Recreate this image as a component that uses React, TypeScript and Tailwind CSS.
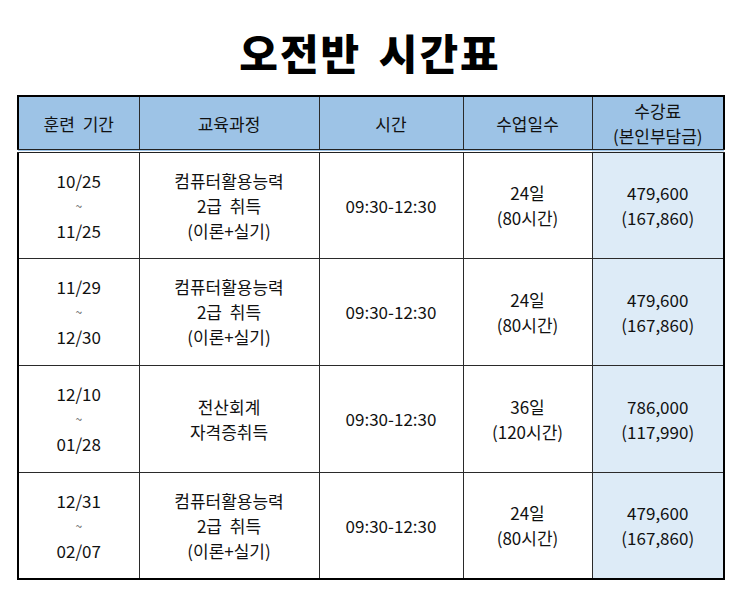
const font = { fontFamily: '"Noto Sans CJK KR", "Noto Sans", sans-serif' }

type Row = {
  period: [string, string]
  course: string[]
  time: string
  days: [string, string]
  fee: [string, string]
}

const rows: Row[] = [
  {
    period: ['10/25', '11/25'],
    course: ['컴퓨터활용능력', '2급 취득', '(이론+실기)'],
    time: '09:30-12:30',
    days: ['24일', '(80시간)'],
    fee: ['479,600', '(167,860)'],
  },
  {
    period: ['11/29', '12/30'],
    course: ['컴퓨터활용능력', '2급 취득', '(이론+실기)'],
    time: '09:30-12:30',
    days: ['24일', '(80시간)'],
    fee: ['479,600', '(167,860)'],
  },
  {
    period: ['12/10', '01/28'],
    course: ['전산회계', '자격증취득'],
    time: '09:30-12:30',
    days: ['36일', '(120시간)'],
    fee: ['786,000', '(117,990)'],
  },
  {
    period: ['12/31', '02/07'],
    course: ['컴퓨터활용능력', '2급 취득', '(이론+실기)'],
    time: '09:30-12:30',
    days: ['24일', '(80시간)'],
    fee: ['479,600', '(167,860)'],
  },
]

const cell =
  'border-[1.5px] border-[#2a2a2a] text-center align-middle text-[17px] leading-[25px] text-[#111] [word-spacing:4px]'

export default function App() {
  return (
    <div className="w-[740px] h-[590px] bg-white" style={font}>
      {/* title */}
      <div className="h-[95px] flex items-center justify-center pt-[8px]">
        <h1 className="text-[42px] font-black tracking-[2px] [word-spacing:6px] text-black">오전반 시간표</h1>
      </div>

      <div className="px-[17px]">
        <table className="w-[706px] table-fixed border-collapse border-2 border-black">
          <colgroup>
            <col className="w-[121px]" />
            <col className="w-[180px]" />
            <col className="w-[144px]" />
            <col className="w-[129px]" />
            <col className="w-[132px]" />
          </colgroup>
          <thead>
            <tr className="h-[55px] bg-[#9dc3e6] border-b-4 border-double border-[#222]">
              <th className={`${cell} font-normal`}>훈련 기간</th>
              <th className={`${cell} font-normal`}>교육과정</th>
              <th className={`${cell} font-normal`}>시간</th>
              <th className={`${cell} font-normal`}>수업일수</th>
              <th className={`${cell} font-normal leading-[22px]`}>
                수강료
                <br />
                (본인부담금)
              </th>
            </tr>
          </thead>
          <tbody>
            {rows.map((r, i) => (
              <tr key={i} className="h-[107px]">
                <td className={cell}>
                  <div>{r.period[0]}</div>
                  <div className="text-[12px] leading-[25px] text-[#555]">~</div>
                  <div>{r.period[1]}</div>
                </td>
                <td className={cell}>
                  {r.course.map((c) => (
                    <div key={c}>{c}</div>
                  ))}
                </td>
                <td className={cell}>{r.time}</td>
                <td className={cell}>
                  <div>{r.days[0]}</div>
                  <div>{r.days[1]}</div>
                </td>
                <td className={`${cell} bg-[#ddebf7]`}>
                  <div>{r.fee[0]}</div>
                  <div>{r.fee[1]}</div>
                </td>
              </tr>
            ))}
          </tbody>
        </table>
      </div>
    </div>
  )
}
